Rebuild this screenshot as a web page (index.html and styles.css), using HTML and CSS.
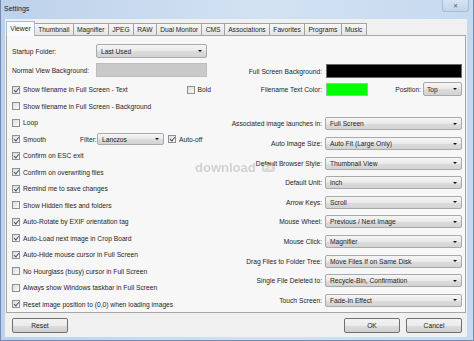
FILE: index.html
```html
<!DOCTYPE html>
<html>
<head>
  <title>Settings</title>
  <link rel="stylesheet" href="styles.css">
</head>
<body>
  <div class="window">
    <div class="titlebar">
      <span class="title">Settings</span>
      <span class="close">&#x2715;</span>
    </div>

    <div class="client">
      <div class="tabs">
        <span class="tab active">Viewer</span>
        <span class="tab">Thumbnail</span>
        <span class="tab">Magnifier</span>
        <span class="tab">JPEG</span>
        <span class="tab">RAW</span>
        <span class="tab">Dual Monitor</span>
        <span class="tab">CMS</span>
        <span class="tab">Associations</span>
        <span class="tab">Favorites</span>
        <span class="tab">Programs</span>
        <span class="tab">Music</span>
      </div>

      <div class="panel">
        <!-- left column: folder, background and the check options -->
        <div class="col-left">
          <div class="left-field">
            <span>Startup Folder:</span>
            <span class="select">Last Used</span>
          </div>
          <div class="left-field gap">
            <span>Normal View Background:</span>
            <span class="swatch gray"></span>
          </div>

          <div class="check-list">
            <div class="check-row">
              <span class="check on"></span><span>Show filename in Full Screen - Text</span>
              <span class="opt"><span class="check"></span>Bold</span>
            </div>
            <div class="check-row"><span class="check"></span><span>Show filename in Full Screen - Background</span></div>
            <div class="check-row"><span class="check"></span><span>Loop</span></div>
            <div class="check-row smooth">
              <span class="cell"><span class="check on"></span>Smooth</span>
              <span>Filter:</span>
              <span class="select">Lanczos</span>
              <span class="cell auto"><span class="check on"></span>Auto-off</span>
            </div>
            <div class="check-row"><span class="check on"></span><span>Confirm on ESC exit</span></div>
            <div class="check-row"><span class="check on"></span><span>Confirm on overwriting files</span></div>
            <div class="check-row"><span class="check on"></span><span>Remind me to save changes</span></div>
            <div class="check-row"><span class="check"></span><span>Show Hidden files and folders</span></div>
            <div class="check-row"><span class="check on"></span><span>Auto-Rotate by EXIF orientation tag</span></div>
            <div class="check-row"><span class="check on"></span><span>Auto-Load next image in Crop Board</span></div>
            <div class="check-row"><span class="check on"></span><span>Auto-Hide mouse cursor in Full Screen</span></div>
            <div class="check-row"><span class="check"></span><span>No Hourglass (busy) cursor in Full Screen</span></div>
            <div class="check-row"><span class="check"></span><span>Always show Windows taskbar in Full Screen</span></div>
            <div class="check-row"><span class="check on"></span><span>Reset image position to (0,0) when loading images</span></div>
          </div>
        </div>

        <!-- right column: colours and drop-downs -->
        <div class="col-right">
          <div class="field">
            <span class="label">Full Screen Background:</span>
            <span class="swatch black"></span>
          </div>
          <div class="field gap">
            <span class="label">Filename Text Color:</span>
            <span class="color-line">
              <span class="swatch green"></span>
              <span class="pos-label">Position:</span>
              <span class="select small">Top</span>
            </span>
          </div>

          <div class="select-list">
            <div class="field tall"><span class="label">Associated image launches in:</span><span class="select">Full Screen</span></div>
            <div class="field tall"><span class="label">Auto Image Size:</span><span class="select">Auto Fit (Large Only)</span></div>
            <div class="field tall"><span class="label">Default Browser Style:</span><span class="select">Thumbnail View</span></div>
            <div class="field tall"><span class="label">Default Unit:</span><span class="select">inch</span></div>
            <div class="field tall"><span class="label">Arrow Keys:</span><span class="select">Scroll</span></div>
            <div class="field tall"><span class="label">Mouse Wheel:</span><span class="select">Previous / Next Image</span></div>
            <div class="field tall"><span class="label">Mouse Click:</span><span class="select">Magnifier</span></div>
            <div class="field tall"><span class="label">Drag Files to Folder Tree:</span><span class="select">Move Files If on Same Disk</span></div>
            <div class="field tall"><span class="label">Single File Deleted to:</span><span class="select">Recycle-Bin, Confirmation</span></div>
            <div class="field tall"><span class="label">Touch Screen:</span><span class="select">Fade-In Effect</span></div>
          </div>
        </div>

        <div class="watermark">download<span class="fx">FX</span></div>
      </div>

      <div class="footer">
        <span class="button">Reset</span>
        <span class="button push">OK</span>
        <span class="button">Cancel</span>
      </div>
    </div>
  </div>
</body>
</html>
```

FILE: styles.css
```css
body {
  margin: 0;
  padding: 0;
  font-family: "Liberation Sans", Arial, sans-serif;
  font-size: 6.7px;
  color: #1e1e1e;
}

.window {
  width: 474px;
  height: 341px;
  box-sizing: border-box;
  display: flex;
  flex-direction: column;
  background: linear-gradient(90deg, #bcd1ea, #d3e2f3 55%, #c6d9ef);
  border: 1px solid #6f8db2;
  border-top: none;
}

.titlebar {
  height: 19px;
  display: flex;
  align-items: flex-start;
  padding-left: 3px;
}

.title {
  margin-top: 5px;
  font-size: 7px;
  color: #1a1a1a;
}

.close {
  margin-left: auto;
  margin-right: 4px;
  width: 27px;
  height: 12px;
  box-sizing: border-box;
  display: flex;
  align-items: center;
  justify-content: center;
  font-size: 6px;
  color: #4a5568;
  background: linear-gradient(#d6e3f2, #c3d5ea);
  border: 1px solid #a6bcd6;
  border-top: none;
  border-radius: 0 0 3px 3px;
}

.client {
  flex: 1;
  margin: 0 6px 3px 4px;
  background: #f0f0f0;
  display: flex;
  flex-direction: column;
}

/* tab strip */
.tabs {
  display: flex;
  align-items: flex-end;
  height: 14px;
  margin: 2px 0 0 1px;
  position: relative;
  z-index: 1;
}

.tab {
  height: 12px;
  box-sizing: border-box;
  padding: 0 3.3px;
  line-height: 11px;
  border: 1px solid #a3a3a3;
  border-bottom: none;
  margin-right: -1px;
  background: linear-gradient(#f7f7f7, #e4e4e4);
  white-space: nowrap;
}

.tab.active {
  height: 15px;
  margin-bottom: -1px;
  line-height: 13px;
  background: #f8fafd;
  border-color: #a3bedd;
  position: relative;
  z-index: 2;
}

/* tab page */
.panel {
  position: relative;
  height: 278px;
  box-sizing: border-box;
  margin: 0 1px;
  padding: 8px 3px 0 5px;
  display: flex;
  background: #f7f7f7;
  border: 1px solid #a6a6a6;
}

.col-left {
  width: 199px;
  flex-shrink: 0;
}

.left-field {
  display: grid;
  grid-template-columns: 84px 111px;
  align-items: center;
  height: 14px;
}

.left-field.gap {
  margin-top: 5px;
}

.check-list {
  margin-top: 4.45px;
}

.check-row {
  display: flex;
  align-items: center;
  height: 16.5px;
  white-space: nowrap;
}

.check {
  position: relative;
  width: 8px;
  height: 8px;
  box-sizing: border-box;
  margin-right: 3px;
  flex-shrink: 0;
  border: 1px solid #8e8f8f;
  background: linear-gradient(135deg, #dcdcdc, #fbfbfb);
}

.check.on::after {
  content: "";
  position: absolute;
  left: 1.8px;
  top: 0;
  width: 1.6px;
  height: 3.8px;
  border: solid #3a5176;
  border-width: 0 1.2px 1.2px 0;
  transform: rotate(38deg);
}

.opt {
  margin-left: auto;
  display: flex;
  align-items: center;
}

.check-row.smooth {
  display: grid;
  grid-template-columns: 68px 17px 67px auto;
  align-items: center;
}

.cell {
  display: flex;
  align-items: center;
}

.cell.auto {
  padding-left: 4px;
}

.smooth .select {
  height: 12px;
}

.col-right {
  flex: 1;
  padding-top: 20px;
}

.field {
  display: grid;
  grid-template-columns: 1fr 137px;
  column-gap: 3px;
  align-items: center;
  height: 14px;
}

.field.gap {
  margin-top: 4px;
}

.field.tall {
  height: 19.6px;
}

.label {
  text-align: right;
  white-space: nowrap;
}

.select-list {
  margin-top: 18.2px;
}

.swatch {
  display: block;
  height: 14px;
  box-sizing: border-box;
}

.swatch.gray {
  background: #c9c9c9;
  border: 1px solid #bdbdbd;
}

.swatch.black {
  margin-left: 1px;
  background: #000;
  border: 1px solid #6a6a6a;
}

.swatch.green {
  width: 42px;
  margin-left: 1px;
  height: 13px;
  background: #00ff00;
  border: 1px solid #8fc98f;
}

.color-line {
  display: flex;
  align-items: center;
}

.pos-label {
  margin-left: auto;
  margin-right: 2px;
}

/* drop-down boxes */
.select {
  position: relative;
  display: flex;
  align-items: center;
  height: 13px;
  box-sizing: border-box;
  padding-left: 4px;
  border: 1px solid #a9a9a9;
  border-radius: 2px;
  background: linear-gradient(#f6f6f6, #e9e9e9 50%, #dcdcdc 51%, #d3d3d3);
  white-space: nowrap;
}

.select::after {
  content: "";
  position: absolute;
  right: 4px;
  top: 50%;
  margin-top: -1px;
  border-left: 2.2px solid transparent;
  border-right: 2.2px solid transparent;
  border-top: 2.6px solid #111;
}

.select.small {
  width: 39px;
  height: 14px;
  padding-left: 3px;
}

.left-field .select {
  height: 14px;
}

/* faint watermark over the page */
.watermark {
  position: absolute;
  left: 188px;
  top: 124px;
  display: flex;
  align-items: center;
  font-size: 13px;
  font-weight: bold;
  color: rgba(0, 0, 0, 0.17);
}

.fx {
  margin-left: 6px;
  padding: 1px 2px;
  font-size: 7px;
  border-radius: 3px;
  color: #f5f5f5;
  background: rgba(0, 0, 0, 0.13);
}

/* bottom buttons */
.footer {
  flex: 1;
  display: flex;
  align-items: flex-start;
  padding: 5px 5px 0 7px;
}

.button {
  width: 56px;
  height: 15px;
  box-sizing: border-box;
  display: flex;
  align-items: center;
  justify-content: center;
  border: 1px solid #707070;
  border-radius: 2px;
  background: linear-gradient(#f3f3f3, #ebebeb 50%, #dddddd 51%, #cfcfcf);
}

.button.push {
  margin-left: auto;
  margin-right: 6px;
}
```
